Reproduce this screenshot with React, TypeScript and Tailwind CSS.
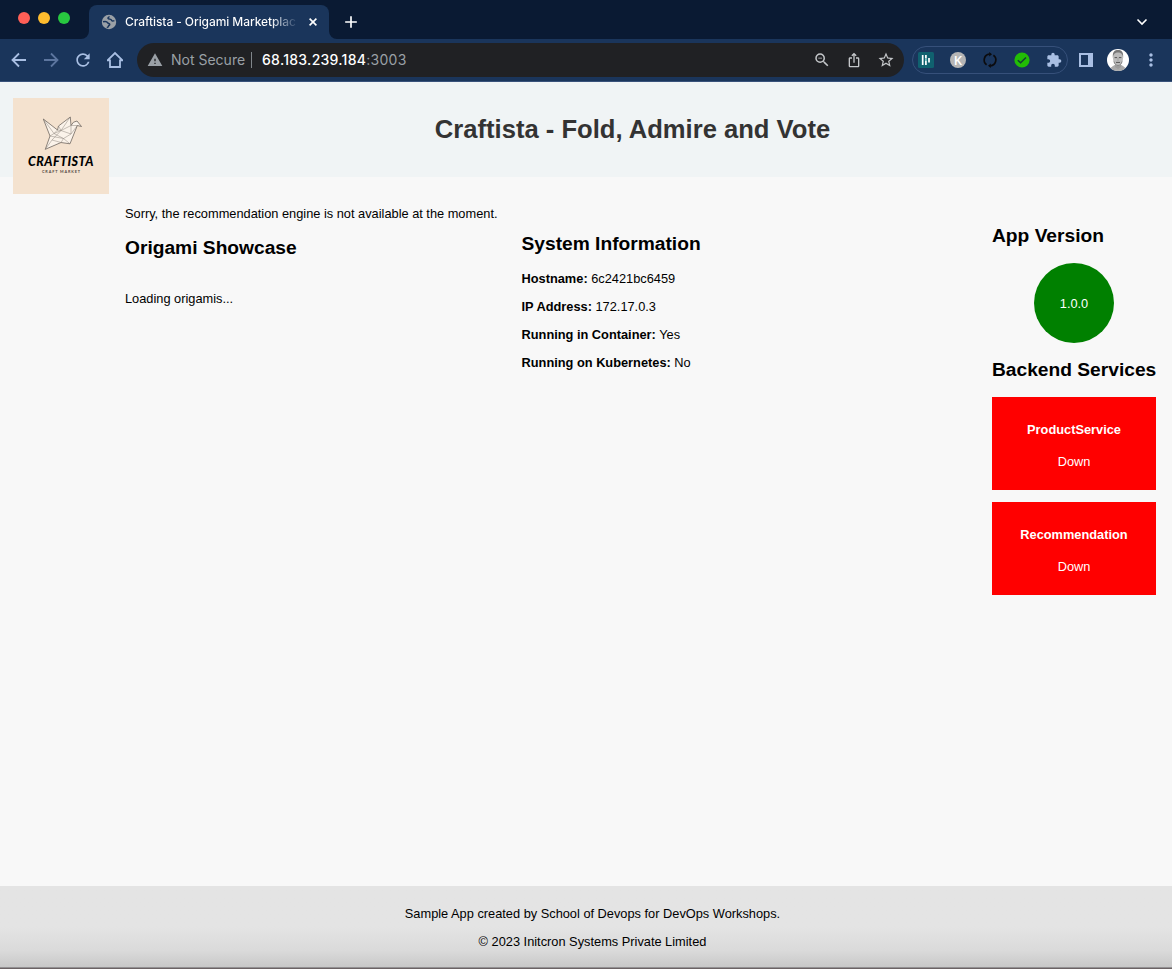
import React from 'react';
import {
  MdAdd,
  MdExtension,
  MdIosShare,
  MdMoreVert,
  MdRefresh,
  MdStarBorder,
  MdWarning,
  MdZoomOut,
} from 'react-icons/md';

function TabStrip() {
  return (
    <div className="flex h-[39px] bg-[#0a1a33]">
      <div className="flex w-[81px] shrink-0 gap-2 pl-[18px] pt-3">
        <span className="size-3 rounded-full bg-[#ff5f57]" />
        <span className="size-3 rounded-full bg-[#febc2e]" />
        <span className="size-3 rounded-full bg-[#28c840]" />
      </div>
      <svg className="mt-[31px] size-2 shrink-0" viewBox="0 0 8 8">
        <path d="M8 0v8H0a8 8 0 0 0 8-8z" fill="#1a355b" />
      </svg>
      <div className="mt-[5px] flex h-[34px] w-[240px] shrink-0 items-center rounded-t-lg bg-[#1a355b] pl-3">
        <svg className="size-4 shrink-0" viewBox="0 0 16 16">
          <circle cx="8" cy="8" r="7.200" fill="#9aa0a6" />
          <path
            d="M2 7.800c2.300-.6 4-.2 4.600.9.500 1 1.900.5 2.100 1.500.1 1-1.100 1.200-1.400 2.200-.2.600-.9.900-1.500.8M8.600 2.600c-1.700.6-2.100 1.700-1 2.200 1.300.5 2.400.2 2.800 1.300.3 1.100 1.900.9 3 .5"
            fill="none"
            stroke="#1a355b"
            strokeWidth="1.500"
          />
        </svg>
        <span className="ml-2 w-[174px] whitespace-nowrap bg-linear-to-r from-white from-84% to-[#1a355b] to-100% bg-clip-text font-['Inter',sans-serif] text-[12px] font-[450] leading-4 tracking-[-0.08px] text-transparent">
          Craftista - Origami Marketplac
        </span>
        <svg className="ml-[10px] size-2 shrink-0" viewBox="0 0 8 8">
          <path d="m.6.6 6.800 6.800M7.400.6.6 7.400" fill="none" stroke="#fff" strokeWidth="1.600" />
        </svg>
      </div>
      <svg className="mt-[31px] size-2 shrink-0" viewBox="0 0 8 8">
        <path d="M0 0v8h8a8 8 0 0 1-8-8z" fill="#1a355b" />
      </svg>
      <MdAdd className="ml-[4px] mt-[12px] size-5 text-white" />
      <svg className="ml-auto mr-6 mt-[18px] h-2 w-3" viewBox="0 0 12 8">
        <path d="M1.500 1.500 6 6l4.500-4.500" fill="none" stroke="#fff" strokeWidth="1.600" />
      </svg>
    </div>
  );
}

function AddressBar() {
  return (
    <div className="flex h-[34px] w-[767px] items-center rounded-full bg-[#202124] pl-[10px] pr-[9px] font-['Inter',sans-serif] text-[14px] leading-5">
      <MdWarning className="size-4 text-[#9aa0a6]" />
      <span className="ml-2 w-[73px] whitespace-nowrap text-[#9aa0a6]">Not Secure</span>
      <span className="ml-[7px] h-4 w-px bg-[#80868b]" />
      <span className="ml-[10px] whitespace-nowrap tracking-[0.28px] text-[#9aa0a6]">
        <span className="font-medium text-white">68.183.239.184</span>:3003
      </span>
      <span className="ml-auto flex gap-[14px] text-[#c4c7ca]">
        <MdZoomOut className="size-[18px]" />
        <MdIosShare className="size-[18px] py-px" />
        <MdStarBorder className="size-[18px]" />
      </span>
    </div>
  );
}

function Extensions() {
  return (
    <div className="ml-2 flex h-7 w-[156px] items-center gap-4 rounded-full border border-[#36507a] pl-[5px]">
      <svg className="size-4 shrink-0" viewBox="0 0 16 16">
        <rect width="16" height="16" rx="1.500" fill="#10616f" />
        <path d="M4.700 3v10M7.900 3v3.500M7.900 9v4M11 6v4.500" stroke="#fff" strokeWidth="1.700" />
        <path d="M7.900 6.500v2.500" stroke="#8fd0ce" strokeWidth="1.700" />
      </svg>
      <span className="flex size-4 shrink-0 items-center justify-center rounded-full bg-[#b5b5b5] font-['Open_Sans',sans-serif] text-[13px] font-semibold leading-none text-white">
        K
      </span>
      <svg className="size-4 shrink-0" viewBox="0 0 16 16" fill="none" stroke="#0b0b0d" strokeWidth="1.700">
        <path d="M4.600 12.700A5.800 5.800 0 0 1 7.500 2.200M11.400 3.300A5.800 5.800 0 0 1 8.500 13.800" />
        <path d="M7.200 0 10 2.200 7.200 4.600zM8.800 11.400 6 13.800l2.800 2.200z" fill="#0b0b0d" stroke="none" />
      </svg>
      <svg className="size-4 shrink-0" viewBox="0 0 16 16">
        <circle cx="8" cy="8" r="7.600" fill="#22bd05" />
        <path d="m3.800 8.200 2.800 2.600 5.400-5.300" fill="none" stroke="#143f33" strokeWidth="1.500" />
      </svg>
      <MdExtension className="size-4 shrink-0 text-[#a9bfe3]" />
    </div>
  );
}

function Avatar() {
  return (
    <svg className="size-[22px] shrink-0" viewBox="0 0 22 22">
      <clipPath id="avatar-clip">
        <circle cx="11" cy="11" r="11" />
      </clipPath>
      <g clipPath="url(#avatar-clip)">
        <rect width="22" height="22" fill="#fff" />
        <path d="M2.500 22c.5-4 4-5 5-6h7c1 1 4.500 2 5 6z" fill="#aaa" />
        <path d="M8 14h6v4l-3 2-3-2z" fill="#9c9c9c" />
        <ellipse cx="11" cy="9.500" rx="5" ry="7.500" fill="#bcbcbc" />
        <path d="M5.900 9C5.200 2 8 1 11 1s5.800 1 5.100 8C15.500 5 14 3.500 11 3.500S6.500 5 5.900 9z" fill="#777" />
        <path d="M7.600 8.600h2.500M11.900 8.600h2.500M9 13.400h4" stroke="#555" strokeWidth="1" />
        <path d="M11 9v3" stroke="#999" strokeWidth=".8" />
        <path d="M7 12.500c1 5.300 7 5.300 8 0" fill="none" stroke="#858585" />
      </g>
    </svg>
  );
}

function Toolbar() {
  return (
    <div className="flex h-[43px] items-center border-b border-[#39527a] bg-[#1a355b] text-[#a9bfe3]">
      <div className="flex w-[137px] shrink-0 items-center gap-4 pl-[11px]">
        <svg className="size-4 shrink-0" viewBox="0 0 16 16" fill="none" stroke="currentColor" strokeWidth="1.800">
          <path d="M15 8H2M8 1.500 1.500 8 8 14.500" />
        </svg>
        <svg className="size-4 shrink-0 text-[#5d769f]" viewBox="0 0 16 16" fill="none" stroke="currentColor" strokeWidth="1.800">
          <path d="M1 8h13M8 1.500 14.500 8 8 14.500" />
        </svg>
        <MdRefresh className="-mx-0.5 size-5 shrink-0" />
        <svg className="-mx-px size-[18px] shrink-0" viewBox="0 0 18 18" fill="none" stroke="currentColor" strokeWidth="1.800">
          <path d="M1.500 9.300 9 2l7.500 7.300M1 9.300h3V16h10V9.300h3" />
        </svg>
      </div>
      <AddressBar />
      <Extensions />
      <svg className="ml-[11px] size-[14px] shrink-0" viewBox="0 0 14 14">
        <path d="M0 0h14v14H0zM2 2v10h7V2z" fill="currentColor" fillRule="evenodd" />
      </svg>
      <span className="ml-[14px] flex">
        <Avatar />
      </span>
      <MdMoreVert className="ml-3 size-5" />
    </div>
  );
}

function Logo() {
  return (
    <svg className="absolute left-[13px] top-4 size-24" viewBox="0 0 96 96">
      <rect width="96" height="96" fill="#f4e2cf" />
      <g fill="#fbf3ea" stroke="#5b554f" strokeWidth=".7" strokeLinejoin="round">
        <path d="M30.300 21 44.500 32 45.500 28 57.300 19 58 27.500 60.500 24.200 64 23 68.500 28.500 64.300 27.500 57 45.800 48 44.500 32.300 51.300 37 38z" />
        <path
          d="M30.300 21 41 35.500l3.500-3.500M37 38l4-2.500M45.500 28l2.500 4.500 10-5M57.300 19 48 32.500l-3.500-.5M41 35.500l7-3M48 32.500l10 3.500M58 27.500V36M64.300 27.500 58 36l-7.500 4.500L41 35.500M50.500 40.500 57 45.800M50.500 40.500 37 38M50.500 40.500 48 44.500 39 42M39 42l-6.700 9.300M39 42l9-9.500M58 27.500l6.300 0"
          fill="none"
          stroke="#8f877e"
          strokeWidth=".5"
        />
      </g>
      <text
        x="15"
        y="67.500"
        textLength="65.500"
        className="fill-black font-['Lato',sans-serif] text-[12.500px] font-black italic"
      >
        CRAFTISTA
      </text>
      <text
        x="29"
        y="75.200"
        textLength="38"
        className="fill-[#51473f] font-['Lato',sans-serif] text-[3.800px] font-bold"
      >
        CRAFT MARKET
      </text>
    </svg>
  );
}

function Info({ label, value }: { label: string; value: string }) {
  return (
    <p className="mb-[12px] leading-4">
      <strong>{label}:</strong> {value}
    </p>
  );
}

function ServiceCard({ name }: { name: string }) {
  return (
    <div className="mb-3 h-[93px] bg-[#ff0000] pt-[25px] text-center text-white">
      <p className="font-bold leading-4">{name}</p>
      <p className="mt-4 leading-4">Down</p>
    </div>
  );
}

export default function App() {
  return (
    <div className="flex h-[969px] w-[1172px] flex-col overflow-hidden bg-[#f8f8f8] font-['Liberation_Sans',Arial,sans-serif] text-[12.800px] text-black">
      <TabStrip />
      <Toolbar />
      <header className="relative h-[95px] shrink-0 bg-[#f0f4f5] pl-[93px] pt-8 text-center">
        <Logo />
        <h1 className="text-[25.600px] font-bold leading-[30px] text-[#333]">Craftista - Fold, Admire and Vote</h1>
      </header>
      <main className="flex flex-1 pl-[125px] pr-4">
        <section className="w-[396px] shrink-0 pt-[29px]">
          <p className="whitespace-nowrap leading-4">Sorry, the recommendation engine is not available at the moment.</p>
          <h2 className="mt-[14px] text-[19.200px] font-bold leading-6">Origami Showcase</h2>
          <p className="mt-[31px] leading-4">Loading origamis...</p>
        </section>
        <section className="pl-[0.500px] pt-[55px]">
          <h2 className="mb-[15px] text-[19.200px] font-bold leading-6">System Information</h2>
          <Info label="Hostname" value="6c2421bc6459" />
          <Info label="IP Address" value="172.17.0.3" />
          <Info label="Running in Container" value="Yes" />
          <Info label="Running on Kubernetes" value="No" />
        </section>
        <aside className="ml-auto w-[164px] pt-[47px]">
          <h2 className="text-[19.200px] font-bold leading-6">App Version</h2>
          <div className="mx-auto mt-[15px] flex size-20 items-center justify-center rounded-full bg-[#008000] pt-px text-white">
            1.0.0
          </div>
          <h2 className="mb-[15px] mt-[15px] whitespace-nowrap text-[19.200px] font-bold leading-6">
            Backend Services
          </h2>
          <ServiceCard name="ProductService" />
          <ServiceCard name="Recommendation" />
        </aside>
      </main>
      <footer className="h-[82px] shrink-0 border-b border-[#929092] bg-linear-to-b from-[#e4e4e4] from-50% via-[#dadada] via-80% to-[#c8c8c8] pl-[13px] pt-5 text-center">
        <p className="leading-4">Sample App created by School of Devops for DevOps Workshops.</p>
        <p className="mt-3 leading-4">© 2023 Initcron Systems Private Limited</p>
      </footer>
      <div className="h-px shrink-0 bg-[#6b6264]" />
    </div>
  );
}
